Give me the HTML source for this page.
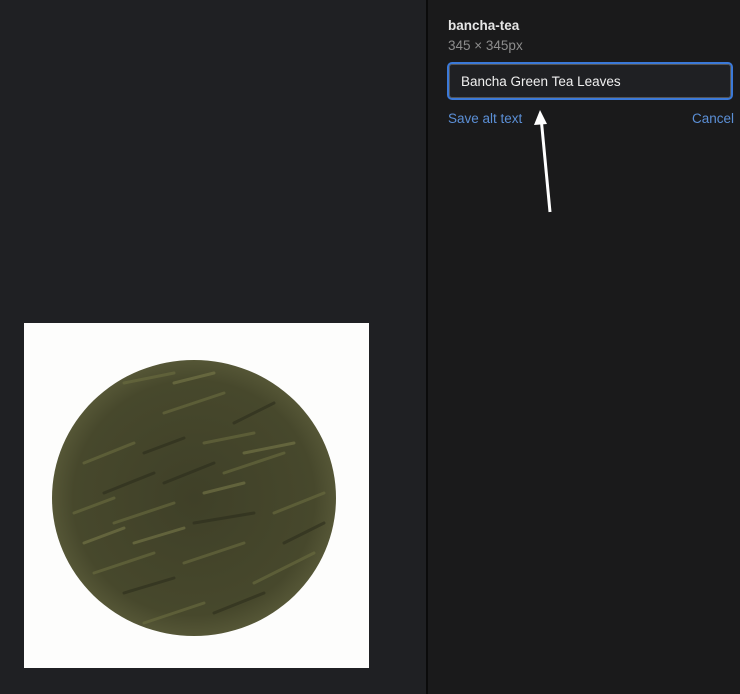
<!DOCTYPE html>
<html><head><meta charset="utf-8"><style>
html,body{margin:0;padding:0}
body{width:740px;height:694px;position:relative;overflow:hidden;background:#1f2023;font-family:"Liberation Sans",sans-serif}
.left{position:absolute;left:0;top:0;width:426px;height:694px;background:#1f2023}
.div{position:absolute;left:426px;top:0;width:2px;height:694px;background:#0b0b0b}
.right{position:absolute;left:428px;top:0;width:312px;height:694px;background:#1a1a1b}
.img{position:absolute;left:24px;top:323px;width:345px;height:345px;background:#fdfdfc}
.t{position:absolute;left:448px;top:18px;color:#e6e6e6;font-weight:bold;font-size:13.5px}
.s{position:absolute;left:448px;top:38px;color:#8d8d8d;font-size:13.5px}
.inp{position:absolute;left:447px;top:62px;width:282px;height:34px;border:2px solid #3b79d8;border-radius:5px;background:#1f2023;box-shadow:inset 0 0 0 1px #555}
.inp span{position:absolute;left:12px;top:10px;color:#f0f0f0;font-size:13.5px}
.a{position:absolute;top:111px;color:#5b8fd6;font-size:13.5px}
</style></head><body>
<div class="left"></div><div class="div"></div><div class="right"></div>
<div class="img">
<svg width="345" height="345" viewBox="0 0 345 345">
<defs><radialGradient id="g" cx="50%" cy="50%" r="50%"><stop offset="0" stop-color="#3f4028"/><stop offset="0.85" stop-color="#47482c"/><stop offset="1" stop-color="#555636"/></radialGradient></defs>
<ellipse cx="170" cy="175" rx="142" ry="138" fill="url(#g)"/>
<g stroke-width="3" stroke-linecap="round" opacity="0.55">
<path d="M60 140 L110 120 M90 200 L150 180 M140 90 L200 70 M200 150 L260 130 M70 250 L130 230 M160 240 L220 220 M230 260 L290 230 M120 300 L180 280 M50 190 L90 175 M250 190 L300 170 M180 120 L230 110 M100 60 L150 50" stroke="#6f7142"/>
<path d="M80 170 L130 150 M170 200 L230 190 M120 130 L160 115 M210 100 L250 80 M100 270 L150 255 M190 290 L240 270 M260 220 L300 200 M140 160 L190 140" stroke="#2a2b1b"/>
<path d="M110 220 L160 205 M220 130 L270 120 M150 60 L190 50 M60 220 L100 205 M180 170 L220 160" stroke="#7d7e4c"/>
</g>
</svg>
</div>
<div class="t">bancha-tea</div>
<div class="s">345 × 345px</div>
<div class="inp"><span>Bancha Green Tea Leaves</span></div>
<div class="a" style="left:448px">Save alt text</div>
<div class="a" style="left:692px">Cancel</div>
<svg style="position:absolute;left:530px;top:105px" width="30" height="115">
<path d="M20 107 L11 12" stroke="#fff" stroke-width="3"/>
<path d="M10 5 L4 20 L17 19 Z" fill="#fff"/>
</svg>
</body></html>
